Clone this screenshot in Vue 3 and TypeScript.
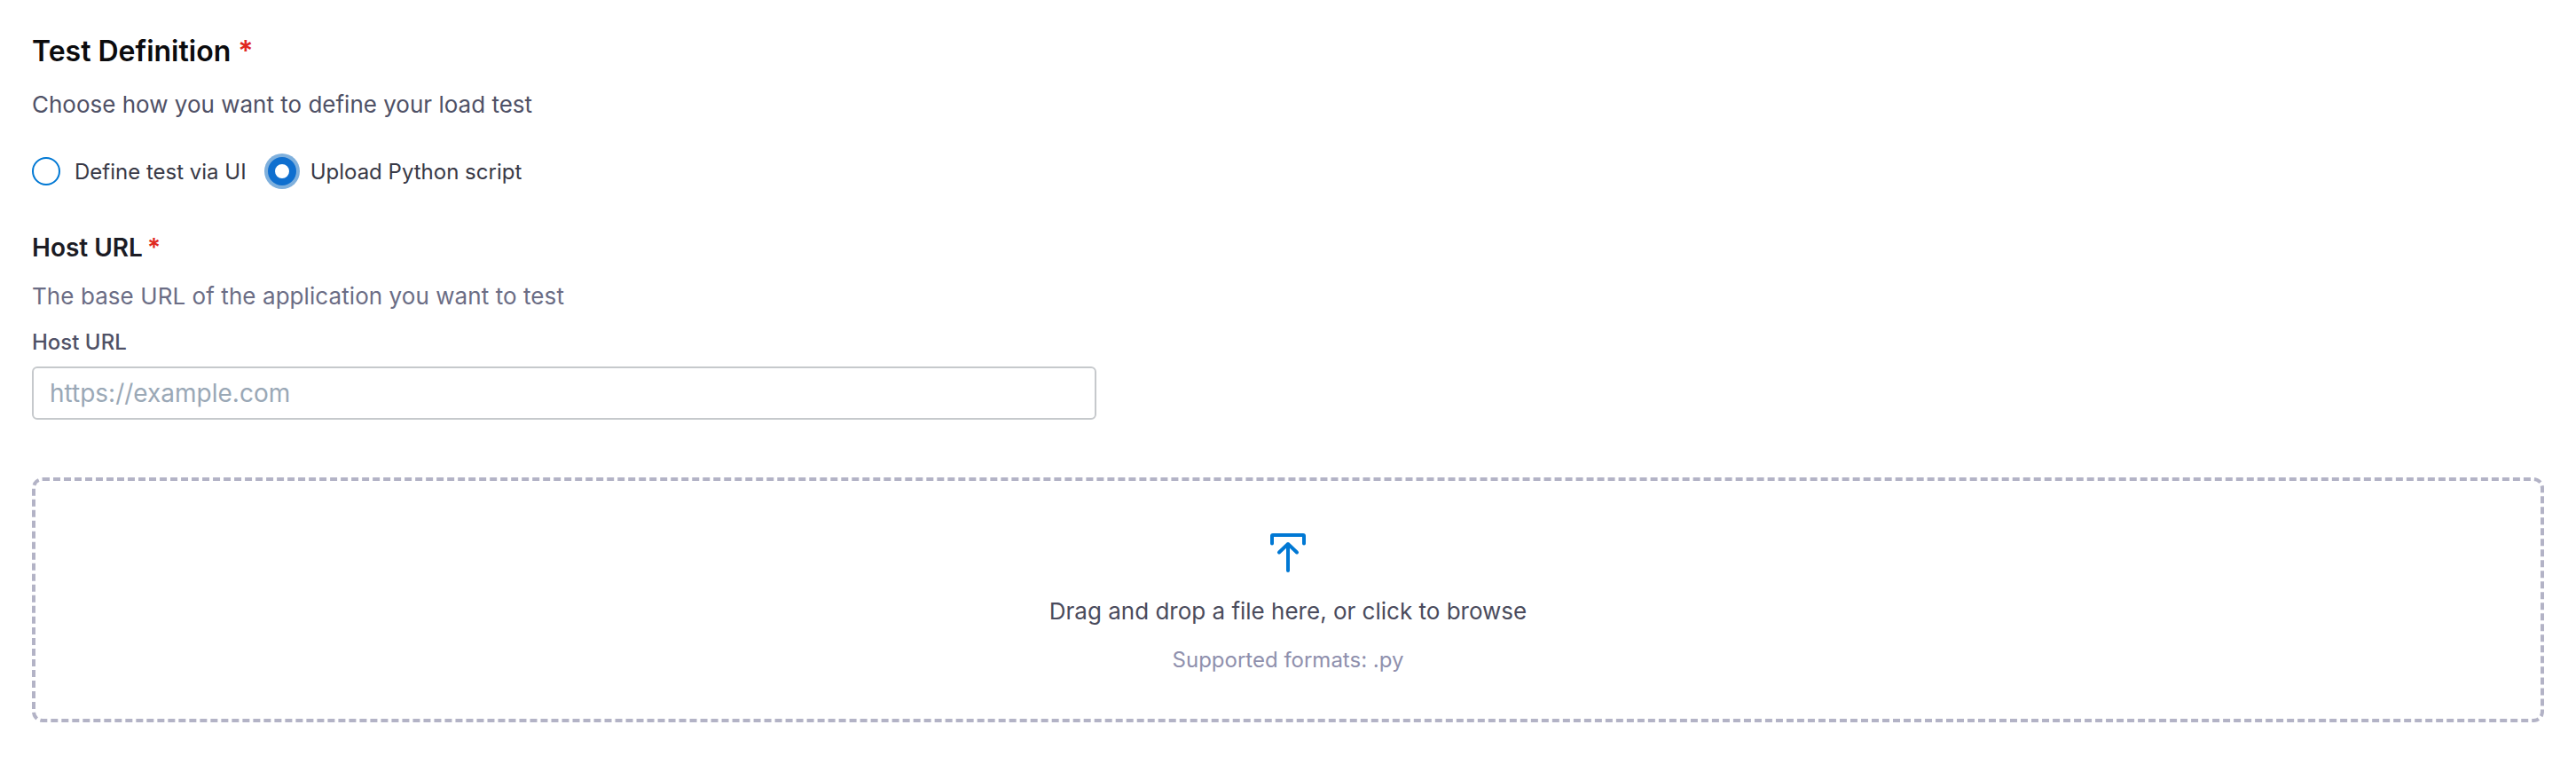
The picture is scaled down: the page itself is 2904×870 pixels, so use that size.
<template>
  <div class="page">
    <section class="definition">
      <h2 class="title">Test Definition <span class="req">*</span></h2>
      <p class="sub">Choose how you want to define your load test</p>
      <div class="radios">
        <label class="radio" v-for="opt in options" :key="opt.value">
          <span class="dot" :class="{ on: mode === opt.value }"></span>
          <span class="radio-text">{{ opt.label }}</span>
        </label>
      </div>
    </section>

    <section class="host">
      <h3 class="host-title">Host URL<span class="req host-req">*</span></h3>
      <p class="host-sub">The base URL of the application you want to test</p>
      <label class="field-label" for="host">Host URL</label>
      <input id="host" class="field" type="text" placeholder="https://example.com" />
    </section>

    <div class="drop">
      <svg class="drop-icon" width="48" height="48" viewBox="0 0 48 48" fill="none">
        <path d="M6 13.5V5a1 1 0 0 1 1-1h34a1 1 0 0 1 1 1v8.5" stroke="#0078d4" stroke-width="4" stroke-linecap="round" />
        <path d="M24 44V14M14 23.5L24 14l10 9.5" stroke="#0078d4" stroke-width="4" stroke-linecap="round" stroke-linejoin="round" />
      </svg>
      <p class="drop-text">Drag and drop a file here, or click to browse</p>
      <p class="drop-hint">Supported formats: .py</p>
    </div>
  </div>
</template>

<script setup lang="ts">
import { ref } from 'vue';

const mode = ref('python');
const options = [
  { value: 'ui', label: 'Define test via UI' },
  { value: 'python', label: 'Upload Python script' },
];
</script>

<style>
html, body {
  background: #fff;
}
</style>

<style scoped>
.page {
  box-sizing: border-box;
  width: 2904px;
  height: 870px;
  padding: 36px 36px 0;
  font-family: Inter, "Noto Sans", sans-serif;
  background: #fff;
}

p, h2, h3 {
  margin: 0;
}

.title {
  font-size: 32px;
  line-height: 44px;
  font-weight: 600;
  color: #0b0b0d;
}

.req {
  color: #e0281f;
}

.host-req {
  margin-left: 5px;
}

.sub {
  margin-top: 18px;
  font-size: 26px;
  line-height: 40px;
  color: #4f5166;
}

.radios {
  display: flex;
  gap: 24px;
  margin-top: 35px;
}

.radio {
  display: flex;
  align-items: center;
  gap: 16px;
  height: 40px;
}

.dot {
  box-sizing: border-box;
  width: 32px;
  height: 32px;
  border: 2px solid #0078d4;
  border-radius: 50%;
}

.dot.on {
  border: 8px solid #0f6fcf;
  background: #fff;
  box-shadow: 0 0 0 4px #7fb0dd;
}

.radio-text {
  font-size: 24px;
  color: #383946;
}

.host {
  margin-top: 46px;
}

.host-title {
  font-size: 28px;
  line-height: 40px;
  font-weight: 600;
  color: #1c1c24;
}

.host-sub {
  margin-top: 17px;
  font-size: 26px;
  line-height: 36px;
  letter-spacing: 0.07px;
  color: #6b6d85;
}

.field-label {
  display: block;
  margin-top: 18px;
  font-size: 24px;
  line-height: 32px;
  font-weight: 500;
  color: #4f5166;
}

.field {
  display: block;
  box-sizing: border-box;
  width: 1200px;
  height: 60px;
  margin-top: 11px;
  padding: 0 18px;
  border: 2px solid #c6c9cc;
  border-radius: 6px;
  font-family: inherit;
  font-size: 28px;
  background: #fff;
  outline: none;
}

.field::placeholder {
  color: #9aa8b6;
}

.drop {
  box-sizing: border-box;
  display: flex;
  flex-direction: column;
  align-items: center;
  width: 2832px;
  height: 276px;
  margin-top: 65px;
  padding-top: 57px;
  border: 4px dashed #b3b3c6;
  border-radius: 12px;
}

.drop-text {
  margin-top: 24px;
  font-size: 26px;
  line-height: 36px;
  color: #4a4b5c;
}

.drop-hint {
  margin-top: 21px;
  font-size: 24px;
  line-height: 32px;
  color: #8f90ad;
}
</style>
